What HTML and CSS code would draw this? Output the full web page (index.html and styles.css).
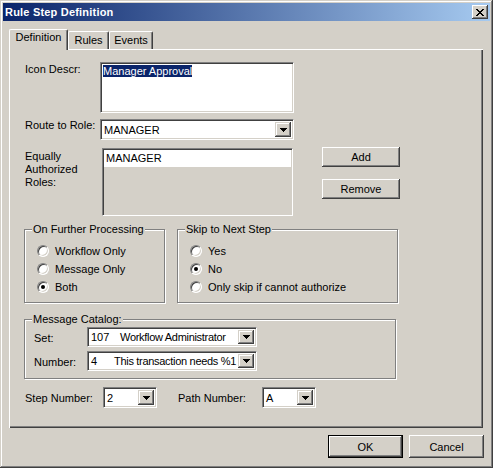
FILE: index.html
```html
<!DOCTYPE html>
<html lang="en">
<head>
    <meta charset="UTF-8">
    <title>Rule Step Definition</title>
    <link rel="stylesheet" href="styles.css">
</head>
<body>
    <div class="window">
        <div class="titlebar">
            <span class="title">Rule Step Definition</span>
            <span class="close-btn">
                <svg width="8" height="7" viewBox="0 0 8 7" shape-rendering="crispEdges"><path d="M0 0h2v1H0zM6 0h2v1H6zM1 1h2v1H1zM5 1h2v1H5zM2 2h4v1H2zM3 3h2v1H3zM2 4h4v1H2zM1 5h2v1H1zM5 5h2v1H5zM0 6h2v1H0zM6 6h2v1H6z"/></svg>
            </span>
        </div>

        <div class="dialog-body">
            <div class="tabs">
                <div class="tab active tab-def">Definition</div>
                <div class="tab tab-rules">Rules</div>
                <div class="tab tab-events">Events</div>
            </div>

            <div class="tab-panel">
                <div class="row row-descr">
                    <span class="field-label">Icon Descr:</span>
                    <div class="textarea"><span class="selected">Manager Approval</span></div>
                </div>

                <div class="row row-route">
                    <span class="field-label">Route to Role:</span>
                    <div class="combo combo-wide">
                        <span class="combo-text">MANAGER</span>
                        <span class="drop-btn"><svg width="7" height="4" viewBox="0 0 7 4" shape-rendering="crispEdges"><path d="M0 0h7v1H0zM1 1h5v1H1zM2 2h3v1H2zM3 3h1v1H3z"/></svg></span>
                    </div>
                </div>

                <div class="row row-roles">
                    <span class="field-label label-roles">Equally<br>Authorized<br>Roles:</span>
                    <div class="listbox">
                        <div class="list-item">MANAGER</div>
                    </div>
                    <div class="side-buttons">
                        <span class="btn btn-side">Add</span>
                        <span class="btn btn-side">Remove</span>
                    </div>
                </div>

                <div class="row row-groups">
                    <div class="group group-proc">
                        <span class="group-title">On Further Processing</span>
                        <div class="radio"><span class="radio-dot"></span>Workflow Only</div>
                        <div class="radio"><span class="radio-dot"></span>Message Only</div>
                        <div class="radio"><span class="radio-dot checked"></span>Both</div>
                    </div>
                    <div class="group group-skip">
                        <span class="group-title">Skip to Next Step</span>
                        <div class="radio"><span class="radio-dot"></span>Yes</div>
                        <div class="radio"><span class="radio-dot checked"></span>No</div>
                        <div class="radio"><span class="radio-dot"></span>Only skip if cannot authorize</div>
                    </div>
                </div>

                <div class="group group-msg">
                    <span class="group-title">Message Catalog:</span>
                    <div class="msg-row">
                        <span class="msg-label">Set:</span>
                        <div class="combo combo-msg">
                            <span class="combo-text"><span class="code code-set">107</span>Workflow Administrator</span>
                            <span class="drop-btn"><svg width="7" height="4" viewBox="0 0 7 4" shape-rendering="crispEdges"><path d="M0 0h7v1H0zM1 1h5v1H1zM2 2h3v1H2zM3 3h1v1H3z"/></svg></span>
                        </div>
                    </div>
                    <div class="msg-row">
                        <span class="msg-label">Number:</span>
                        <div class="combo combo-msg">
                            <span class="combo-text"><span class="code code-num">4</span>This transaction needs %1</span>
                            <span class="drop-btn"><svg width="7" height="4" viewBox="0 0 7 4" shape-rendering="crispEdges"><path d="M0 0h7v1H0zM1 1h5v1H1zM2 2h3v1H2zM3 3h1v1H3z"/></svg></span>
                        </div>
                    </div>
                </div>

                <div class="row row-step">
                    <span class="step-label">Step Number:</span>
                    <div class="combo combo-small">
                        <span class="combo-text">2</span>
                        <span class="drop-btn"><svg width="7" height="4" viewBox="0 0 7 4" shape-rendering="crispEdges"><path d="M0 0h7v1H0zM1 1h5v1H1zM2 2h3v1H2zM3 3h1v1H3z"/></svg></span>
                    </div>
                    <span class="step-label path-label">Path Number:</span>
                    <div class="combo combo-small">
                        <span class="combo-text">A</span>
                        <span class="drop-btn"><svg width="7" height="4" viewBox="0 0 7 4" shape-rendering="crispEdges"><path d="M0 0h7v1H0zM1 1h5v1H1zM2 2h3v1H2zM3 3h1v1H3z"/></svg></span>
                    </div>
                </div>
            </div>

            <div class="dialog-buttons">
                <span class="btn btn-dialog default">OK</span>
                <span class="btn btn-dialog">Cancel</span>
            </div>
        </div>
    </div>
</body>
</html>
```

FILE: styles.css
```css
body {
    margin: 0;
    font-family: "Liberation Sans", Arial, sans-serif;
    font-size: 11px;
    color: #000;
    background: #d4d0c8;
}
.window {
    width: 493px;
    height: 468px;
    box-sizing: border-box;
    padding: 3px;
    background: #d4d0c8;
    display: flex;
    flex-direction: column;
    box-shadow: inset -1px -1px #404040, inset 1px 1px #d4d0c8, inset -2px -2px #808080, inset 2px 2px #fff;
}
/* Title bar */
.titlebar {
    height: 18px;
    display: flex;
    align-items: center;
    justify-content: space-between;
    padding: 0 2px;
    background: linear-gradient(to right, #0a246a, #a6caf0);
}
.title {
    color: #fff;
    font-weight: bold;
    font-size: 11px;
    line-height: 13px;
    letter-spacing: 0.2px;
}
.close-btn {
    width: 16px;
    height: 14px;
    box-sizing: border-box;
    display: flex;
    justify-content: center;
    align-items: center;
    background: #d4d0c8;
    box-shadow: inset -1px -1px #404040, inset 1px 1px #fff, inset -2px -2px #808080, inset 2px 2px #d4d0c8;
}
.close-btn svg,
.drop-btn svg {
    display: block;
    fill: #000;
}
/* Body */
.dialog-body {
    display: flex;
    flex-direction: column;
    padding: 8px 6px 0 6px;
}
.tabs {
    height: 20px;
    display: flex;
    align-items: flex-end;
}
.tab {
    height: 18px;
    box-sizing: border-box;
    padding-top: 2px;
    line-height: 13px;
    text-align: center;
    background: #d4d0c8;
    border-top: 1px solid #fff;
    border-left: 1px solid #fff;
    border-right: 1px solid #404040;
    border-radius: 2px 2px 0 0;
    box-shadow: inset -1px 0 #808080;
}
.tab.active {
    height: 21px;
    padding-top: 1px;
    margin-bottom: -1px;
    position: relative;
    z-index: 1;
}
.tab-def { width: 59px; }
.tab-rules { width: 41px; }
.tab-events { width: 44px; }
.tab-panel {
    width: 474px;
    height: 379px;
    box-sizing: border-box;
    padding: 13px 0 0 15px;
    display: flex;
    flex-direction: column;
    box-shadow: inset 1px 1px #fff, inset -1px -1px #404040, inset -2px -2px #808080;
}
.row {
    display: flex;
    align-items: flex-start;
}
.field-label {
    width: 76px;
    box-sizing: border-box;
    padding-left: 1px;
    line-height: 13px;
}
.row-descr .field-label { margin-top: 1px; }
.row-route { margin-top: 6px; }
.row-roles { margin-top: 7px; }
.label-roles { margin-top: 3px; }
/* Sunken controls */
.textarea,
.combo,
.listbox {
    box-sizing: border-box;
    border: 1px solid;
    border-color: #808080 #fff #fff #808080;
    box-shadow: inset 1px 1px #404040, inset -1px -1px #d4d0c8;
}
.textarea {
    width: 194px;
    height: 51px;
    background: #fff;
    padding: 2px 2px;
    line-height: 13px;
}
.selected {
    background: #0a246a;
    color: #fff;
}
.combo {
    background: #fff;
    display: flex;
    align-items: center;
    padding: 2px;
}
.combo-text {
    flex: 1;
    padding-left: 1px;
    white-space: nowrap;
    overflow: hidden;
}
.drop-btn {
    width: 16px;
    height: 100%;
    flex-shrink: 0;
    box-sizing: border-box;
    display: flex;
    justify-content: center;
    align-items: center;
    background: #d4d0c8;
    box-shadow: inset -1px -1px #404040, inset 1px 1px #d4d0c8, inset -2px -2px #808080, inset 2px 2px #fff;
}
.combo-wide { width: 194px; height: 21px; }
.combo-msg { width: 170px; height: 20px; letter-spacing: -0.3px; }
.combo-small { width: 54px; height: 21px; }
.listbox {
    width: 191px;
    height: 68px;
    margin: 1px 0 0 2px;
    padding: 1px;
    background: #d4d0c8;
}
.list-item {
    height: 17px;
    line-height: 17px;
    padding-left: 2px;
    background: #fff;
}
/* Buttons */
.btn {
    box-sizing: border-box;
    display: flex;
    justify-content: center;
    align-items: center;
    background: #d4d0c8;
    box-shadow: inset -1px -1px #404040, inset 1px 1px #fff, inset -2px -2px #808080, inset 2px 2px #d4d0c8;
}
.side-buttons {
    display: flex;
    flex-direction: column;
    gap: 12px;
    margin-left: 29px;
}
.btn-side { width: 78px; height: 20px; }
.dialog-buttons {
    display: flex;
    justify-content: flex-end;
    gap: 6px;
    margin-top: 7px;
}
.btn-dialog { width: 75px; height: 23px; }
.btn-dialog.default {
    border: 1px solid #000;
}
/* Group boxes */
.row-groups {
    margin-top: 13px;
    gap: 12px;
}
.group {
    position: relative;
    box-sizing: border-box;
    border: 1px solid #808080;
    box-shadow: inset 1px 1px #fff, 1px 1px #fff;
}
.group-title {
    position: absolute;
    top: -7px;
    left: 7px;
    padding: 0 1px;
    line-height: 13px;
    background: #d4d0c8;
}
.group-proc,
.group-skip {
    height: 74px;
    padding: 12px 0 0 12px;
}
.group-proc { width: 141px; }
.group-skip { width: 221px; }
.radio {
    height: 18px;
    display: flex;
    align-items: center;
    white-space: nowrap;
}
.radio-dot {
    width: 12px;
    height: 12px;
    box-sizing: border-box;
    margin-right: 6px;
    border-radius: 50%;
    background: #fff;
    border: 1px solid;
    border-color: #808080 #fff #fff #808080;
    box-shadow: inset 1px 1px #404040, inset -1px -1px #d4d0c8;
    display: flex;
    justify-content: center;
    align-items: center;
}
.radio-dot.checked::after {
    content: "";
    width: 4px;
    height: 4px;
    border-radius: 50%;
    background: #000;
}
.group-msg {
    width: 372px;
    height: 60px;
    margin-top: 16px;
    padding: 7px 0 0 9px;
    display: flex;
    flex-direction: column;
    gap: 4px;
}
.msg-row {
    display: flex;
    align-items: center;
}
.msg-label {
    width: 53px;
    padding-top: 2px;
}
.code {
    display: inline-block;
    letter-spacing: 0;
}
.code-set { width: 29px; }
.code-num { width: 23px; }
.row-step {
    margin-top: 8px;
    align-items: center;
}
.step-label {
    width: 79px;
    box-sizing: border-box;
    padding-left: 1px;
    padding-top: 1px;
}
.path-label {
    width: 84px;
    margin-left: 21px;
    padding-left: 0;
}
```
